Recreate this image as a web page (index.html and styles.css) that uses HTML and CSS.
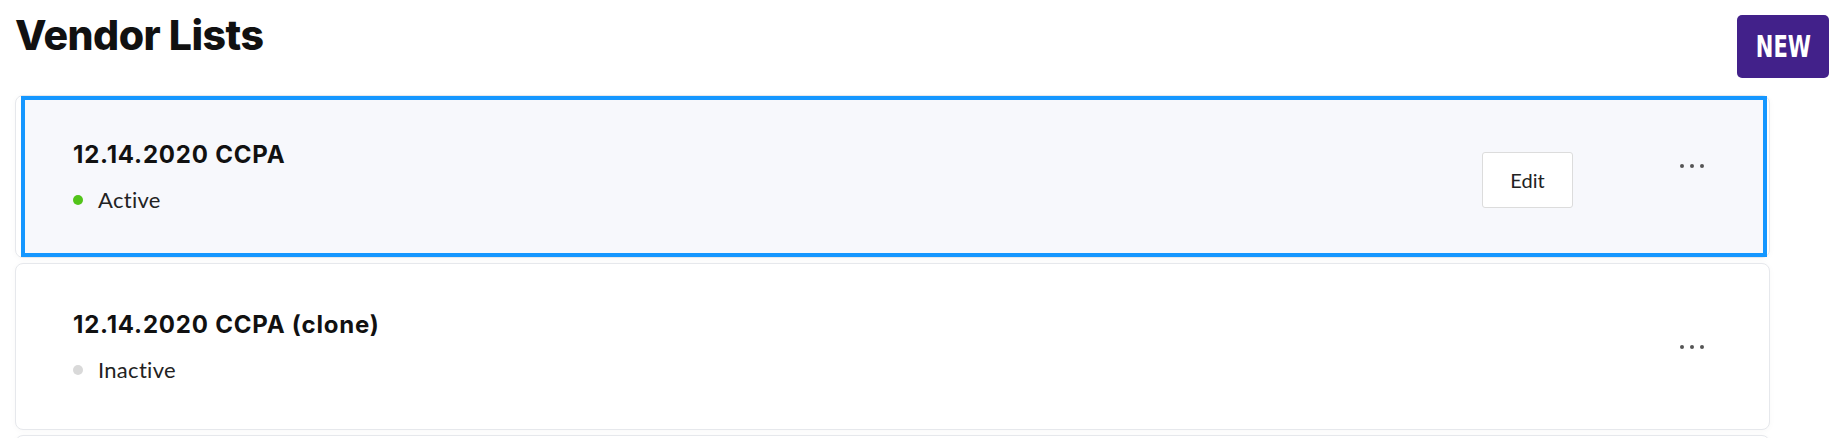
FILE: index.html
```html
<!DOCTYPE html>
<html lang="en">
<head>
    <meta charset="UTF-8">
    <meta name="viewport" content="width=device-width, initial-scale=1.0">
    <title>Vendor Lists</title>
    <link rel="stylesheet" href="styles.css">
</head>
<body>
    <div class="page">
        <header class="page-header">
            <h1>Vendor Lists</h1>
            <button class="btn-new"><span>NEW</span></button>
        </header>
        <div class="list">
            <div class="card selected">
                <div class="card-info">
                    <div class="card-title">12.14.2020 CCPA</div>
                    <div class="status"><span class="dot active"></span>Active</div>
                </div>
                <div class="card-actions">
                    <button class="btn-edit">Edit</button>
                    <button class="btn-more"><span></span><span></span><span></span></button>
                </div>
            </div>
            <div class="card">
                <div class="card-info">
                    <div class="card-title">12.14.2020 CCPA (clone)</div>
                    <div class="status"><span class="dot"></span>Inactive</div>
                </div>
                <div class="card-actions">
                    <button class="btn-more"><span></span><span></span><span></span></button>
                </div>
            </div>
            <div class="card"></div>
        </div>
    </div>
</body>
</html>
```

FILE: styles.css
```css
body {
    margin: 0;
    font-family: Lato, "Open Sans", sans-serif;
    color: #111;
    background: #fff;
    overflow: hidden;
}
.page {
    padding: 15px 9px 0 15px;
}
.page-header {
    display: flex;
    justify-content: space-between;
    align-items: flex-start;
    height: 80px;
}
.page-header h1 {
    margin: 0;
    font-family: Inter, Lato, sans-serif;
    font-size: 41px;
    font-weight: 800;
    line-height: 40px;
    letter-spacing: -0.5px;
}
.btn-new {
    width: 92px;
    height: 63px;
    border: none;
    border-radius: 5px;
    background: #42218a;
    color: #fff;
    font-family: "Liberation Sans Narrow", "DejaVu Sans", sans-serif;
    font-weight: 700;
    font-size: 30px;
    padding: 0;
    display: flex;
    align-items: center;
    justify-content: center;
}
.btn-new span {
    display: inline-block;
    transform: scaleX(0.7);
}
.list {
    margin-right: 59px;
    display: flex;
    flex-direction: column;
    gap: 5px;
}
.card {
    position: relative;
    isolation: isolate;
    display: flex;
    justify-content: space-between;
    align-items: center;
    height: 167px;
    box-sizing: border-box;
    padding: 0 65px 0 57px;
    border: 1px solid #e6e8ec;
    border-radius: 8px;
    background: #fff;
    box-shadow: 0 1px 6px rgba(0, 0, 0, 0.03);
}
.card.selected {
    height: 163px;
}
.card.selected::after {
    content: "";
    position: absolute;
    top: 0;
    bottom: 0;
    left: 5px;
    right: 2px;
    border: 4px solid #1597ff;
    background: #f7f8fc;
    z-index: -1;
}
.card-title {
    font-family: Inter, Lato, sans-serif;
    font-size: 24px;
    font-weight: 700;
    letter-spacing: 0.8px;
    margin-bottom: 17px;
}
.status {
    display: flex;
    align-items: center;
    font-size: 22px;
    color: #222;
    letter-spacing: 0.3px;
}
.dot {
    width: 10px;
    height: 10px;
    border-radius: 50%;
    background: #d9d9d9;
    margin-right: 15px;
}
.dot.active {
    background: #52c41a;
}
.card-actions {
    display: flex;
    align-items: center;
    gap: 107px;
}
.btn-edit {
    width: 91px;
    height: 56px;
    margin-top: 6px;
    border: 1px solid #dcdcdc;
    border-radius: 3px;
    background: #fff;
    font-family: Lato, sans-serif;
    font-size: 20px;
    color: #222;
}
.btn-more {
    display: flex;
    gap: 6px;
    padding: 0;
    border: none;
    background: none;
}
.selected .btn-more {
    margin-top: -22px;
}
.btn-more span {
    width: 4px;
    height: 4px;
    border-radius: 50%;
    background: #555;
}
```
